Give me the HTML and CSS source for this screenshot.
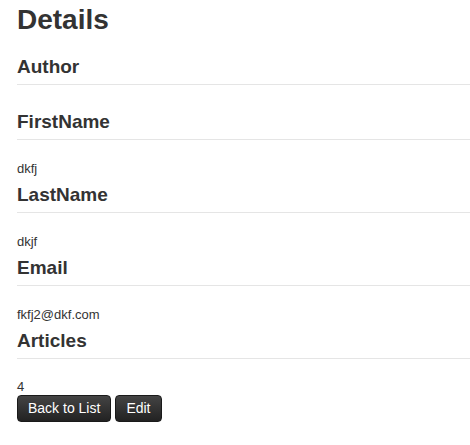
FILE: index.html
```html
<!DOCTYPE html>
<html>
<head>
<meta charset="utf-8">
<title>Details</title>
<link rel="stylesheet" href="styles.css">
</head>
<body>
<div class="page">
  <h1 class="title">Details</h1>
  <h4 class="heading">Author</h4>
  <hr class="rule">
  <h4 class="heading">FirstName</h4>
  <hr class="rule">
  <div class="value">dkfj</div>
  <h4 class="heading">LastName</h4>
  <hr class="rule">
  <div class="value">dkjf</div>
  <h4 class="heading">Email</h4>
  <hr class="rule">
  <div class="value">fkfj2@dkf.com</div>
  <h4 class="heading">Articles</h4>
  <hr class="rule">
  <div class="value value-last">4</div>
  <div class="actions">
    <a class="btn" href="#">Back to List</a>
    <a class="btn" href="#">Edit</a>
  </div>
</div>
</body>
</html>
```
FILE: styles.css
```css
html, body {
  margin: 0;
  padding: 0;
  background: #ffffff;
}

body {
  font-family: "Liberation Sans", Arial, sans-serif;
  color: #333333;
}

.page {
  display: flex;
  flex-direction: column;
  padding-left: 17px;
}

.title {
  margin: 0 0 14px 0;
  padding-top: 4px;
  font-size: 28px;
  line-height: 32px;
  font-weight: bold;
  color: #333333;
}

.heading {
  margin: 6px 0 6px 0;
  font-size: 19px;
  line-height: 22px;
  font-weight: bold;
  color: #333333;
}

.rule {
  margin: 0 0 20px 0;
  border: 0;
  border-top: 1px solid #e5e5e5;
  height: 0;
  width: 100%;
}

.value {
  font-size: 13px;
  line-height: 18px;
  color: #333333;
}

.value-last {
  line-height: 16px;
}

.actions {
  display: flex;
  gap: 4px;
}

.btn {
  display: inline-block;
  box-sizing: border-box;
  height: 27px;
  padding: 0 10px;
  font-size: 14px;
  line-height: 25px;
  color: #ffffff;
  text-decoration: none;
  border: 1px solid #1a1a1a;
  border-radius: 4px;
  background: linear-gradient(#444444, #222222);
}
```
